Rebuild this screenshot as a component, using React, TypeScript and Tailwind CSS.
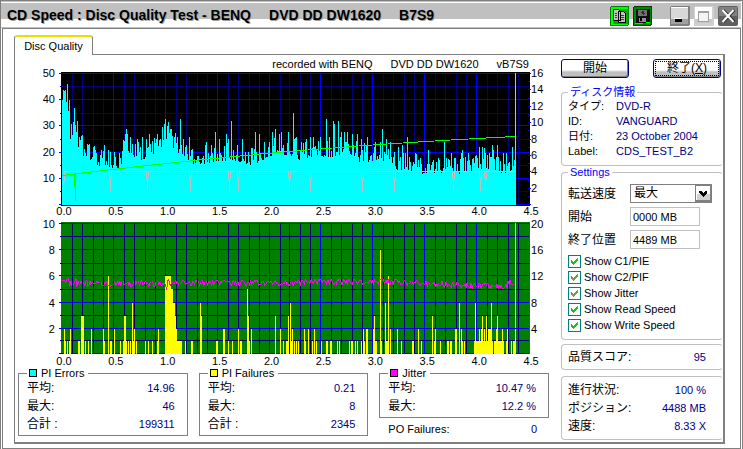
import React from "react";

// ---------- chart data ----------
const FLOOR: [number, number][] = [
  [0, 40], [6, 36], [8, 25], [12, 27], [16, 22], [20, 19], [28, 17], [33, 15], [45, 15], [56, 13], [60, 16],
  [63, 22], [68, 19], [80, 17], [90, 19], [101, 23], [104, 25], [112, 21], [124, 18], [133, 15], [150, 16],
  [170, 17], [190, 15], [210, 19], [228, 19], [238, 17], [256, 19], [268, 18], [285, 20], [300, 16], [320, 17],
  [338, 13], [355, 12], [380, 12], [400, 11], [412, 13], [424, 14], [440, 12], [455, 12],
];
const SPIKES: [number, number][] = [
  [1, 44], [3, 44], [5, 46], [7, 40], [9, 31], [12, 37], [15, 32], [17, 26], [26, 23], [33, 21], [39, 21], [42, 23],
  [46, 21], [63, 27], [64, 29], [65, 27], [68, 26], [75, 25], [80, 26], [84, 25], [87, 27], [95, 27], [98, 25],
  [102, 31], [103, 33], [105, 30], [109, 29], [115, 26], [118, 33], [121, 25], [127, 26], [144, 24], [153, 28],
  [157, 25], [164, 27], [166, 25], [169, 32], [175, 23], [180, 25], [193, 28], [197, 27], [202, 24], [210, 28],
  [213, 29], [217, 27], [219, 28], [224, 28], [227, 28], [232, 35], [235, 26], [245, 25], [249, 26], [252, 26],
  [259, 26], [265, 33], [268, 26], [272, 32], [273, 31], [277, 32], [280, 28], [283, 28], [286, 28], [291, 27], [296, 27],
  [300, 25], [306, 26], [314, 24], [321, 29], [325, 25], [329, 24], [337, 22], [341, 23], [346, 26], [354, 20],
  [367, 21], [372, 17], [378, 17], [383, 24], [390, 20], [400, 20], [401, 21], [408, 17], [415, 19], [418, 22],
  [421, 22], [424, 20], [428, 20], [431, 23], [436, 23], [445, 20], [451, 22], [453, 17], [454, 28],
];
// [first pixel, last pixel, count]
const FAILURES: [number, number, number][] = [
  [64, 64, 2], [65, 65, 1], [67, 67, 1], [69, 69, 1], [70, 70, 2], [78, 79, 1], [81, 83, 3], [85, 85, 1], [88, 88, 1],
  [91, 91, 2], [103, 103, 2], [104, 104, 1], [108, 108, 6], [110, 111, 1], [114, 114, 2], [120, 120, 1], [123, 123, 1],
  [124, 125, 3], [126, 126, 1], [128, 128, 1], [130, 130, 1], [132, 132, 4], [133, 133, 1], [134, 134, 2], [136, 136, 1],
  [145, 145, 1], [148, 148, 1], [152, 152, 1], [157, 157, 1], [158, 158, 2], [165, 170, 6], [171, 172, 5], [173, 174, 4],
  [175, 175, 3], [176, 176, 2], [177, 181, 1], [185, 185, 1], [191, 192, 1], [200, 200, 4], [201, 201, 3], [216, 217, 1],
  [223, 224, 2], [228, 228, 1], [232, 232, 1], [238, 238, 2], [240, 241, 1], [247, 247, 5], [248, 248, 3], [249, 249, 1],
  [251, 251, 2], [275, 275, 3], [280, 280, 2], [283, 283, 1], [287, 288, 1], [289, 289, 3], [291, 291, 4], [292, 292, 1],
  [293, 293, 2], [295, 295, 1], [297, 297, 1], [299, 299, 1], [305, 305, 2], [306, 306, 1], [309, 309, 2], [313, 313, 1],
  [315, 315, 2], [317, 317, 1], [322, 322, 1], [327, 328, 1], [331, 332, 1], [338, 338, 1], [340, 340, 1], [350, 350, 1],
  [352, 353, 1], [356, 356, 1], [358, 358, 1], [362, 362, 1], [364, 364, 2], [365, 365, 1], [367, 368, 2], [374, 374, 2],
  [375, 375, 3], [376, 377, 1], [381, 381, 8], [382, 382, 1], [386, 386, 4], [387, 388, 1], [389, 389, 6], [391, 391, 2],
  [398, 398, 2], [402, 402, 1], [413, 414, 1], [419, 419, 2], [422, 422, 1], [433, 433, 3], [435, 435, 1], [436, 436, 2],
  [441, 441, 1], [448, 449, 1], [451, 452, 1], [456, 457, 2], [460, 460, 4], [462, 462, 2], [463, 463, 1], [465, 465, 1],
  [475, 493, 1], [476, 476, 4], [480, 480, 2], [482, 482, 2], [483, 483, 3], [485, 485, 2], [487, 487, 3], [489, 491, 2],
  [492, 492, 4], [495, 504, 1], [497, 497, 2], [498, 498, 3], [503, 503, 2], [507, 508, 1], [508, 508, 2], [512, 512, 1],
  [514, 516, 1], [516, 516, 2],
];
const DIPS = [110, 147, 190, 229, 238, 290, 311, 363, 395, 454, 481, 486];

const noise = (n: number) => {
  const s = Math.sin(n * 127.1 + 3.7) * 43758.5453;
  return s - Math.floor(s);
};

function floorAt(x: number) {
  for (let i = 1; i < FLOOR.length; i++) {
    const [x0, a] = FLOOR[i - 1];
    const [x1, b] = FLOOR[i];
    if (x <= x1) return a + ((b - a) * (x - x0)) / (x1 - x0);
  }
  return 12;
}

const spikeMap = new Map(SPIKES);
const errorsPath = Array.from({ length: 455 }, (_, i) => {
  const r = noise(i);
  const v = spikeMap.get(i) ?? floorAt(i) + r * r * 8;
  const h = Math.round(v * 2.62);
  return `M${62 + i} ${205 - h}h1v${h}h-1z`;
}).join("");

const jitterPoints = Array.from({ length: 454 }, (_, i) => {
  const base =
    i < 8 ? 281 : i < 100 ? 284 : i < 240 ? 283 : i < 320 ? 282 : 282 + Math.min(4, (i - 320) / 22) - (i > 446 ? 3 : 0);
  const peak = i === 14 ? -8 : i === 105 ? 5 : 0;
  return `${62 + i},${Math.round(base + (noise(i + 900) - 0.5) * 7 + peak)}`;
}).join(" ");

const writeSpeed =
  "M63.500 189V182H64.500V171.500" +
  DIPS.map((x) => `H${x - 1}.500V178.500H${x}.500V191V178.500H${x + 1}.500V171.500`).join("") +
  "H516";

const readSpeed = Array.from({ length: 455 }, (_, i) => {
  const t = i / 454;
  return `${62 + i},${Math.round(175 - 47 * t + 8 * t * t - 2.4 * Math.sin(t * 3.14))}.500`;
}).join(" ");

function Grid({ top, minor }: { top: number; minor: string }) {
  const vs = Array.from({ length: 46 }, (_, i) => i);
  const hs = Array.from({ length: 11 }, (_, i) => i);
  return (
    <g>
      {vs.map((i) => i % 5 !== 0 && <rect key={i} x={Math.round(61.3 + i * 10.4)} y={top} width="1" height="132" fill={minor} />)}
      {hs.map((i) => i % 2 !== 0 && <rect key={i} x="60" y={Math.round(top + 0.3 + i * 13.1)} width="470" height="1" fill={minor} />)}
      {vs.map((i) => i % 5 === 0 && i > 0 && i < 45 && <rect key={i} x={Math.round(61 + i * 10.4)} y={top} width="1" height="132" fill="#0000ff" />)}
      {hs.map((i) => i % 2 === 0 && <rect key={i} x="59" y={Math.round(top + i * 13.1)} width="471" height="1" fill="#0000ff" />)}
    </g>
  );
}

function Labels({ top, left, right }: { top: number; left: number[]; right: number[] }) {
  return (
    <g className="fill-black text-[11px]">
      {left.map((v, i) => (
        <text key={v} x="55" y={Math.round(top + 4 + i * 26.2)} textAnchor="end">{v}</text>
      ))}
      {right.map((v, i) => (
        <text key={v} x="532" y={Math.round(top + 4 + (i * 131) / right.length)}>{v}</text>
      ))}
      {Array.from({ length: 10 }, (_, i) => (
        <text key={i} x={64 + i * 52} y={top + 142} textAnchor="middle">{(i / 2).toFixed(1)}</text>
      ))}
    </g>
  );
}

function Charts() {
  return (
    <svg viewBox="15 67 543 301" className="block w-full" role="img" aria-label="Disc quality charts">
      <g shapeRendering="crispEdges">
        <rect x="61" y="72" width="470" height="134" fill="#000" />
        <Grid top={73} minor="#000080" />
        {Array.from({ length: 17 }, (_, i) => (
          <rect key={i} x="529" y={Math.round(73 + i * 8.2)} width={i % 2 ? 2 : 3} height="1" fill="#0000ff" />
        ))}
        <path d={errorsPath} fill="#00ffff" />
        <path d={writeSpeed} fill="none" stroke="#c0c0c0" />
        <polyline points={readSpeed} fill="none" stroke="#00ff00" strokeWidth="1" />
        <path d="M74 174h2v27h-1v-14h-1z" fill="#00ff00" />
        <rect x="516" y="73" width="1" height="77" fill="#c0c0c0" />
        <rect x="61" y="222" width="470" height="133" fill="#008000" />
        <Grid top={223} minor="#000080" />
        {FAILURES.map(([a, b, v], i) => {
          const h = Math.round(v * 13.1);
          return <rect key={i} x={a} y={355 - h} width={b - a + 1} height={h} fill="#ffff00" />;
        })}
        <polyline points={jitterPoints} fill="none" stroke="#ff00ff" strokeWidth="1" />
        <rect x="516" y="223" width="1" height="105" fill="#c0c0c0" />
      </g>
      <Labels top={73} left={[50, 40, 30, 20, 10]} right={[16, 14, 12, 10, 8, 6, 4, 2]} />
      <Labels top={224} left={[10, 8, 6, 4, 2]} right={[20, 16, 12, 8, 4]} />
    </svg>
  );
}

// ---------- pieces ----------
function Row({ label, value }: { label: string; value: string }) {
  return (
    <div className="flex justify-between leading-[18px]">
      <dt className="text-[12px] leading-[18px]">{label}</dt>
      <dd className="text-[#000080]">{value}</dd>
    </div>
  );
}

function StatBox({ title, swatch, rows }: { title: string; swatch: string; rows: [string, string][] }) {
  return (
    <fieldset className="min-w-0 border border-[#808080] pr-3 pb-0.5 pl-2">
      <legend className="flex h-3 items-center gap-1 pr-1 leading-3">
        <span className={`ml-0.5 size-2 border border-black ${swatch}`} />
        {title}
      </legend>
      <dl>
        {rows.map(([l, v]) => (
          <Row key={l} label={l} value={v} />
        ))}
      </dl>
    </fieldset>
  );
}

function CheckRow({ label, dim }: { label: string; dim?: boolean }) {
  return (
    <label className="flex h-4 items-center gap-[3px]">
      <span className="relative size-[13px]">
        <input type="checkbox" defaultChecked className="peer block size-[13px] appearance-none border border-[#008080] bg-white" />
        <svg viewBox="0 0 13 13" className="pointer-events-none invisible absolute inset-0 peer-checked:visible" shapeRendering="crispEdges">
          <path d="M3 5h1v1h1v1h1V6h1V5h1V4h1V3h1v3H9v1H8v1H7v1H6v1H5V9H4V8H3z" fill={dim ? "#5fa832" : "#00d800"} />
          <path d="M4 7h1v1h1v1H5V8H4zM7 7h1v1H7z" fill={dim ? "#c08040" : "#40a020"} />
        </svg>
      </span>
      {label}
    </label>
  );
}

const panel = "min-w-0 rounded-[4px] border border-[#c0c0c0] border-r-transparent";
const pushButton =
  "h-[19px] w-[68px] rounded-[3px] border border-[#000080] bg-[linear-gradient(#fff_0_10px,#c0c0c0_12px)] text-[12px] leading-[15px] shadow-[inset_-1px_-1px_0_#808080]";

export default function App() {
  return (
    <div className="w-full border border-[#808080] bg-white pr-px pb-px font-['Liberation_Sans','Noto_Sans_CJK_JP',sans-serif] text-[11px] text-black">
      <header className="flex h-[27px] items-center justify-between bg-[linear-gradient(#c0c0c0_0_1px,#fff_1px_2px,#c0c0c0_2px_18px,#fff_18px_26px,#c0c0c0_26px)] pr-[3px] pl-1.5">
        <h1 className="flex gap-[18px] pt-0.5 text-[14px] font-bold whitespace-nowrap [text-shadow:1px_1px_0_#a0a0a0]">
          <span>CD Speed : Disc Quality Test - BENQ</span>
          <span>DVD DD DW1620</span>
          <span>B7S9</span>
        </h1>
        <div className="flex items-center gap-1 pt-0.5">
          <button aria-label="Copy">
            <svg viewBox="0 0 19 20" className="block h-5 w-[19px]" shapeRendering="crispEdges">
              <rect width="19" height="20" rx="2" fill="#008000" />
              <rect x="1" y="1" width="17" height="18" fill="#00ff00" />
              <rect x="3" y="3" width="15" height="15" fill="#00b000" />
              <path d="M3.500 3.500h5l2 2v9h-7zM8.500 5.500h5l2 2v9h-7z" fill="#c0c0c0" stroke="#000" />
              <path d="M5 7h2M5 9h2M5 11h2M10.500 9.500h3M10.500 11.500h3M10.500 13.500h3" stroke="#404040" />
            </svg>
          </button>
          <button aria-label="Save">
            <svg viewBox="0 0 19 20" className="block h-5 w-[19px]" shapeRendering="crispEdges">
              <rect width="19" height="20" rx="2" fill="#004000" />
              <rect x="1" y="1" width="17" height="18" fill="#008800" />
              <rect x="3" y="3" width="14" height="14" fill="#101010" />
              <path d="M5 4h9v6H5z" fill="#707070" />
              <path d="M8 6l2-2 2 4-2 1z" fill="#303030" />
              <path d="M6 12h7v4H6z" fill="#909090" />
              <path d="M7 12h2v3H7z" fill="#000" />
              <path d="M13 16h4v1h-4zM2 17h8v1H2z" fill="#00ff00" />
            </svg>
          </button>
          <span className="w-[10px]" />
          <button aria-label="Minimize">
            <svg viewBox="0 0 20 20" className="block size-5" shapeRendering="crispEdges">
              <rect width="20" height="20" rx="2" fill="#808080" />
              <path d="M1 2h17v11H1z" fill="#d8d8d8" />
              <path d="M1 13h17v5H1z" fill="#a0a0a0" />
              <path d="M1 1h17v1H1z" fill="#fff" />
              <path d="M5 13h7v3H5z" fill="#000" />
              <path d="M4 12h7v1H4z" fill="#fff" />
            </svg>
          </button>
          <button aria-label="Maximize">
            <svg viewBox="0 0 20 20" className="block size-5" shapeRendering="crispEdges">
              <rect width="20" height="20" rx="2" fill="#d0d0d0" />
              <path d="M1 1h17v12H1z" fill="#fff" />
              <path d="M1 13h17v4H1z" fill="#c8c8c8" />
              <path d="M4.500 5.500h10v10h-10zM4 6.500h11" fill="#f4f4f4" stroke="#a0a0a0" />
            </svg>
          </button>
          <button aria-label="Close">
            <svg viewBox="0 0 20 20" className="block size-5">
              <rect width="20" height="20" rx="2" fill="#606060" />
              <path d="M1 1h18v9H1z" fill="#808080" />
              <path d="M5 4l11 12M16 4L5 16" stroke="#202020" strokeWidth="3" />
              <path d="M4.500 4l11 12M15.500 4l-11 12" stroke="#fff" strokeWidth="2" />
            </svg>
          </button>
        </div>
      </header>

      <div className="ml-px border border-[#808080] pt-1.5 pr-[15px] pb-1 pl-[11px]">
        <div role="tablist" className="flex">
          <button
            role="tab"
            aria-selected="true"
            className="relative z-10 -mb-px h-5 w-[79px] rounded-t-[3px] border-x border-t-2 border-[#808080] border-t-[#e8e000] bg-white text-[11px] leading-4"
          >
            Disc Quality
          </button>
        </div>
        <main className="flex border border-r-2 border-b-2 border-[#808080]">
          <section className="min-w-0 flex-1 pr-1">
            <p className="flex h-3 justify-end gap-[18px] pr-7 leading-[18px] whitespace-nowrap">
              <span>recorded with BENQ</span>
              <span>DVD DD DW1620</span>
              <span>vB7S9</span>
            </p>
            <Charts />
            <div className="grid grid-cols-3 items-start gap-[11px] pr-2 pb-1 pl-[3px]">
              <StatBox title="PI Errors" swatch="bg-[#00ffff]" rows={[["平均:", "14.96"], ["最大:", "46"], ["合計 :", "199311"]]} />
              <StatBox title="PI Failures" swatch="bg-[#ffff00]" rows={[["平均:", "0.21"], ["最大:", "8"], ["合計 :", "2345"]]} />
              <div>
                <StatBox title="Jitter" swatch="bg-[#ff00ff]" rows={[["平均:", "10.47 %"], ["最大:", "12.2 %"]]} />
                <dl className="flex justify-between pt-0.5 pr-3 pl-[9px] leading-[18px]">
                  <dt>PO Failures:</dt>
                  <dd className="text-[#000080]">0</dd>
                </dl>
              </div>
            </div>
          </section>

          <aside className="flex w-[162px] flex-col pt-1">
            <div className="mb-2 flex justify-between pr-0.5">
              <button className={pushButton}>開始</button>
              <button className={`${pushButton} outline-1 -outline-offset-3 outline-dotted outline-black`}>
                終了(<u>X</u>)
              </button>
            </div>

            <fieldset className={`${panel} pb-1.5 pl-1.5`}>
              <legend className="h-3 px-0.5 leading-3 text-[#0000ff]">ディスク情報</legend>
              <dl className="grid grid-cols-[48px_1fr] pt-px leading-[15px] whitespace-nowrap">
                <dt>タイプ:</dt>
                <dd className="text-[#000080]">DVD-R</dd>
                <dt>ID:</dt>
                <dd className="text-[#000080]">VANGUARD</dd>
                <dt>日付:</dt>
                <dd className="text-[#000080]">23 October 2004</dd>
                <dt>Label:</dt>
                <dd className="text-[#000080]">CDS_TEST_B2</dd>
              </dl>
            </fieldset>

            <fieldset className={`${panel} pb-1.5 pl-1.5`}>
              <legend className="h-3 px-0.5 leading-3 text-[#0000ff]">Settings</legend>
              <div className="grid grid-cols-[62px_1fr] items-center gap-y-1 pt-1.5 pb-1">
                <label htmlFor="speed" className="text-[12px]">転送速度</label>
                <span className="relative w-[82px]">
                  <select id="speed" className="block h-[19px] w-full appearance-none border border-[#808080] bg-white pl-[3px] text-[12px] leading-[17px]">
                    <option>最大</option>
                  </select>
                  <svg viewBox="0 0 16 17" className="pointer-events-none absolute top-px right-px h-[17px] w-4" shapeRendering="crispEdges">
                    <path d="M0 0h16v17H0z" fill="#808080" />
                    <path d="M1 1h14v14H1z" fill="#fff" />
                    <path d="M2 9h13v6H2z" fill="#d0d0d0" />
                    <path d="M4 6h2l2 2 2-2h2v2l-4 4-4-4z" fill="#000" />
                  </svg>
                </span>
                <label htmlFor="start" className="text-[12px]">開始</label>
                <input id="start" defaultValue="0000 MB" className="h-[19px] w-[70px] border border-[#c0c0c0] pl-0.5" />
                <label htmlFor="end" className="text-[12px]">終了位置</label>
                <input id="end" defaultValue="4489 MB" className="h-[19px] w-[70px] border border-[#c0c0c0] pl-0.5" />
              </div>
              <CheckRow label="Show C1/PIE" />
              <CheckRow label="Show C2/PIF" dim />
              <CheckRow label="Show Jitter" dim />
              <CheckRow label="Show Read Speed" />
              <CheckRow label="Show Write Speed" />
            </fieldset>

            <dl className={`${panel} mt-1 py-[3px] pr-4 pl-1.5`}>
              <Row label="品質スコア:" value="95" />
            </dl>
            <dl className={`${panel} mt-1.5 py-1 pr-4 pl-1.5`}>
              <Row label="進行状況:" value="100 %" />
              <Row label="ポジション:" value="4488 MB" />
              <Row label="速度:" value="8.33 X" />
            </dl>
          </aside>
        </main>
      </div>
    </div>
  );
}
